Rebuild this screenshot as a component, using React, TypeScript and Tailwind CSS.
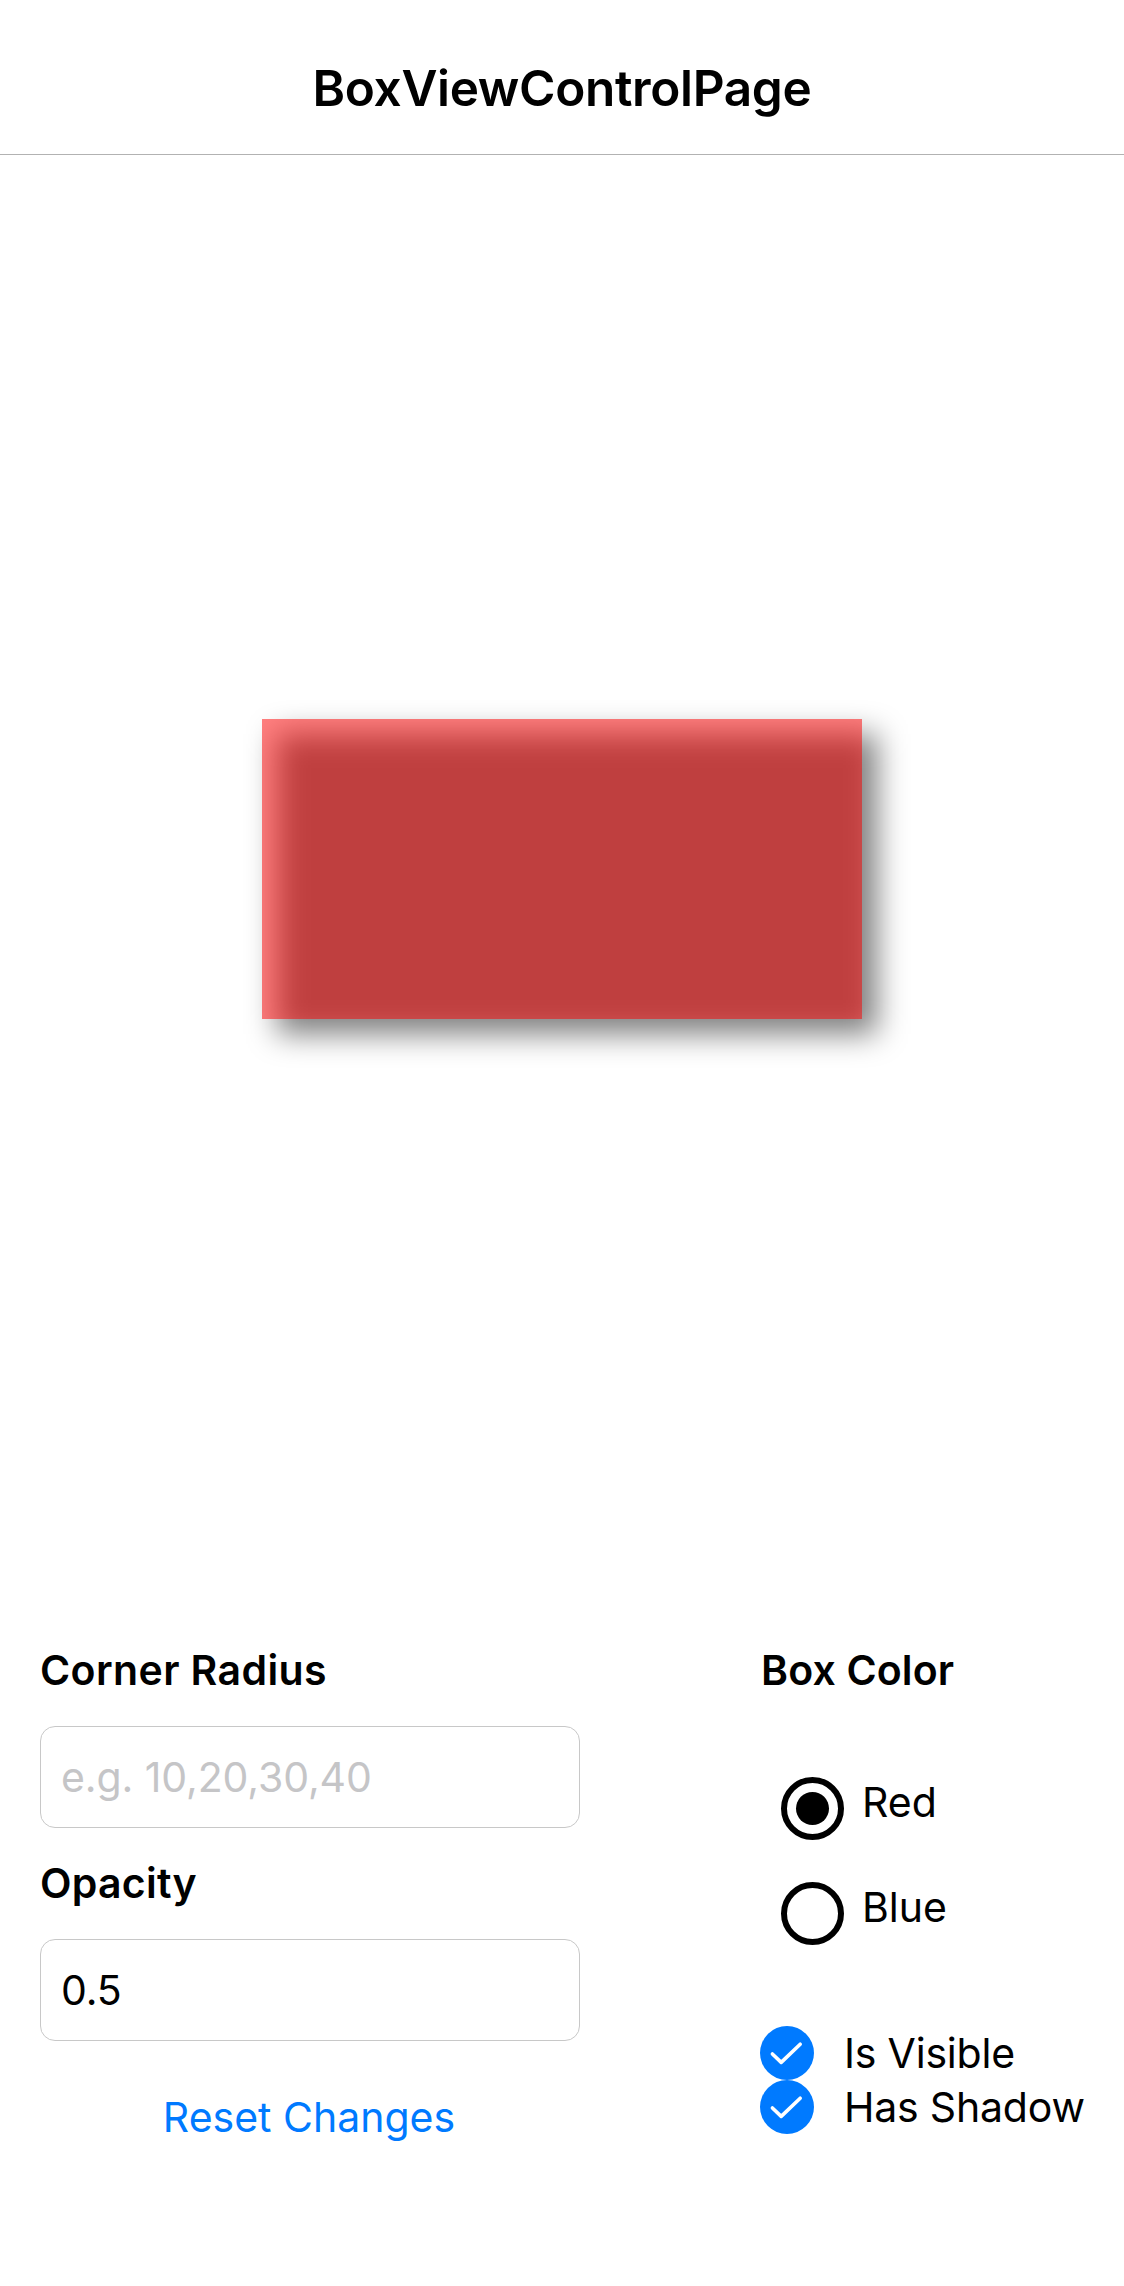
import React, { useState } from "react";

function Radio({ label, checked, onSelect }: { label: string; checked: boolean; onSelect: () => void }) {
  return (
    <button type="button" role="radio" aria-checked={checked} onClick={onSelect} className="flex h-[63px] items-center">
      <span className="flex size-[63px] items-center justify-center rounded-full border-6 border-black">
        {checked && <span className="size-[33px] rounded-full bg-black" />}
      </span>
      <span className="-mt-[13px] ml-[18px]">{label}</span>
    </button>
  );
}

function Check({ label, checked, onToggle }: { label: string; checked: boolean; onToggle: () => void }) {
  return (
    <button type="button" role="checkbox" aria-checked={checked} onClick={onToggle} className="flex h-[54px] items-center">
      <svg viewBox="0 0 54 54" className="size-[54px]" fill="none">
        <circle cx="27" cy="27" r={checked ? 27 : 25.5} fill={checked ? "#007aff" : "none"} stroke={checked ? "none" : "#007aff"} strokeWidth="3" />
        {checked && <path d="M12.4 28L21.2 36.4L40.2 18.2" stroke="white" strokeWidth="3.6" strokeLinecap="round" strokeLinejoin="round" />}
      </svg>
      <span className="ml-[30px] tracking-[-0.2px] whitespace-nowrap">{label}</span>
    </button>
  );
}

const fieldClass =
  "block h-[102px] w-[540px] rounded-[15px] border border-[#c8c8c8] bg-white px-[20px] tracking-[-0.1px] text-black outline-none placeholder:text-[#c5c5c7] placeholder:opacity-100";

export default function App() {
  const [radius, setRadius] = useState("");
  const [opacity, setOpacity] = useState("0.5");
  const [color, setColor] = useState("red");
  const [visible, setVisible] = useState(true);
  const [shadow, setShadow] = useState(true);

  const reset = () => {
    setRadius("");
    setOpacity("0.5");
    setColor("red");
    setVisible(true);
    setShadow(true);
  };

  return (
    <div className="flex h-[2286px] w-[1124px] flex-col overflow-hidden bg-white font-['Inter',sans-serif] text-[41px] leading-[54px] text-black">
      <header className="flex h-[155px] shrink-0 justify-center border-b border-[#b2b2b2] pt-[61px]">
        <h1 className="text-[49.5px] leading-[54px] font-semibold tracking-[-0.35px]">BoxViewControlPage</h1>
      </header>

      <main className="flex h-[1488px] shrink-0 justify-center pt-[564px]">
        {visible && (
          <div className="relative h-[300px] w-[600px]">
            {shadow && <div className="absolute inset-0 translate-x-[15px] translate-y-[15px] bg-black/50 blur-[15px]" />}
            <div
              className={color === "red" ? "absolute inset-0 bg-[#ff0000]" : "absolute inset-0 bg-[#0000ff]"}
              style={{ opacity: Number(opacity) || 0, borderRadius: radius.split(",").map((r) => (Number(r) || 0) + "px").join(" ") }}
            />
          </div>
        )}
      </main>

      <section className="flex pl-[40px]">
        <div className="flex w-[540px] flex-col">
          <label className="font-semibold tracking-[0.4px]">Corner Radius</label>
          <input className={fieldClass + " mt-[29px]"} placeholder="e.g. 10,20,30,40" value={radius} onChange={(e) => setRadius(e.target.value)} />
          <label className="mt-[28px] font-semibold tracking-[0.25px]">Opacity</label>
          <input className={fieldClass + " mt-[29px]"} value={opacity} onChange={(e) => setOpacity(e.target.value)} />
          <button type="button" onClick={reset} className="mt-[49px] mr-[2px] self-center whitespace-nowrap text-[#007aff]">
            Reset Changes
          </button>
        </div>

        <div className="ml-[180px] flex flex-col items-start">
          <h2 className="ml-px font-semibold tracking-[0.15px]">Box Color</h2>
          <div role="radiogroup" className="mt-[80px] ml-[21px] flex flex-col gap-[42px]">
            <Radio label="Red" checked={color === "red"} onSelect={() => setColor("red")} />
            <Radio label="Blue" checked={color === "blue"} onSelect={() => setColor("blue")} />
          </div>
          <div className="mt-[81px] flex flex-col">
            <Check label="Is Visible" checked={visible} onToggle={() => setVisible(!visible)} />
            <Check label="Has Shadow" checked={shadow} onToggle={() => setShadow(!shadow)} />
          </div>
        </div>
      </section>
    </div>
  );
}
